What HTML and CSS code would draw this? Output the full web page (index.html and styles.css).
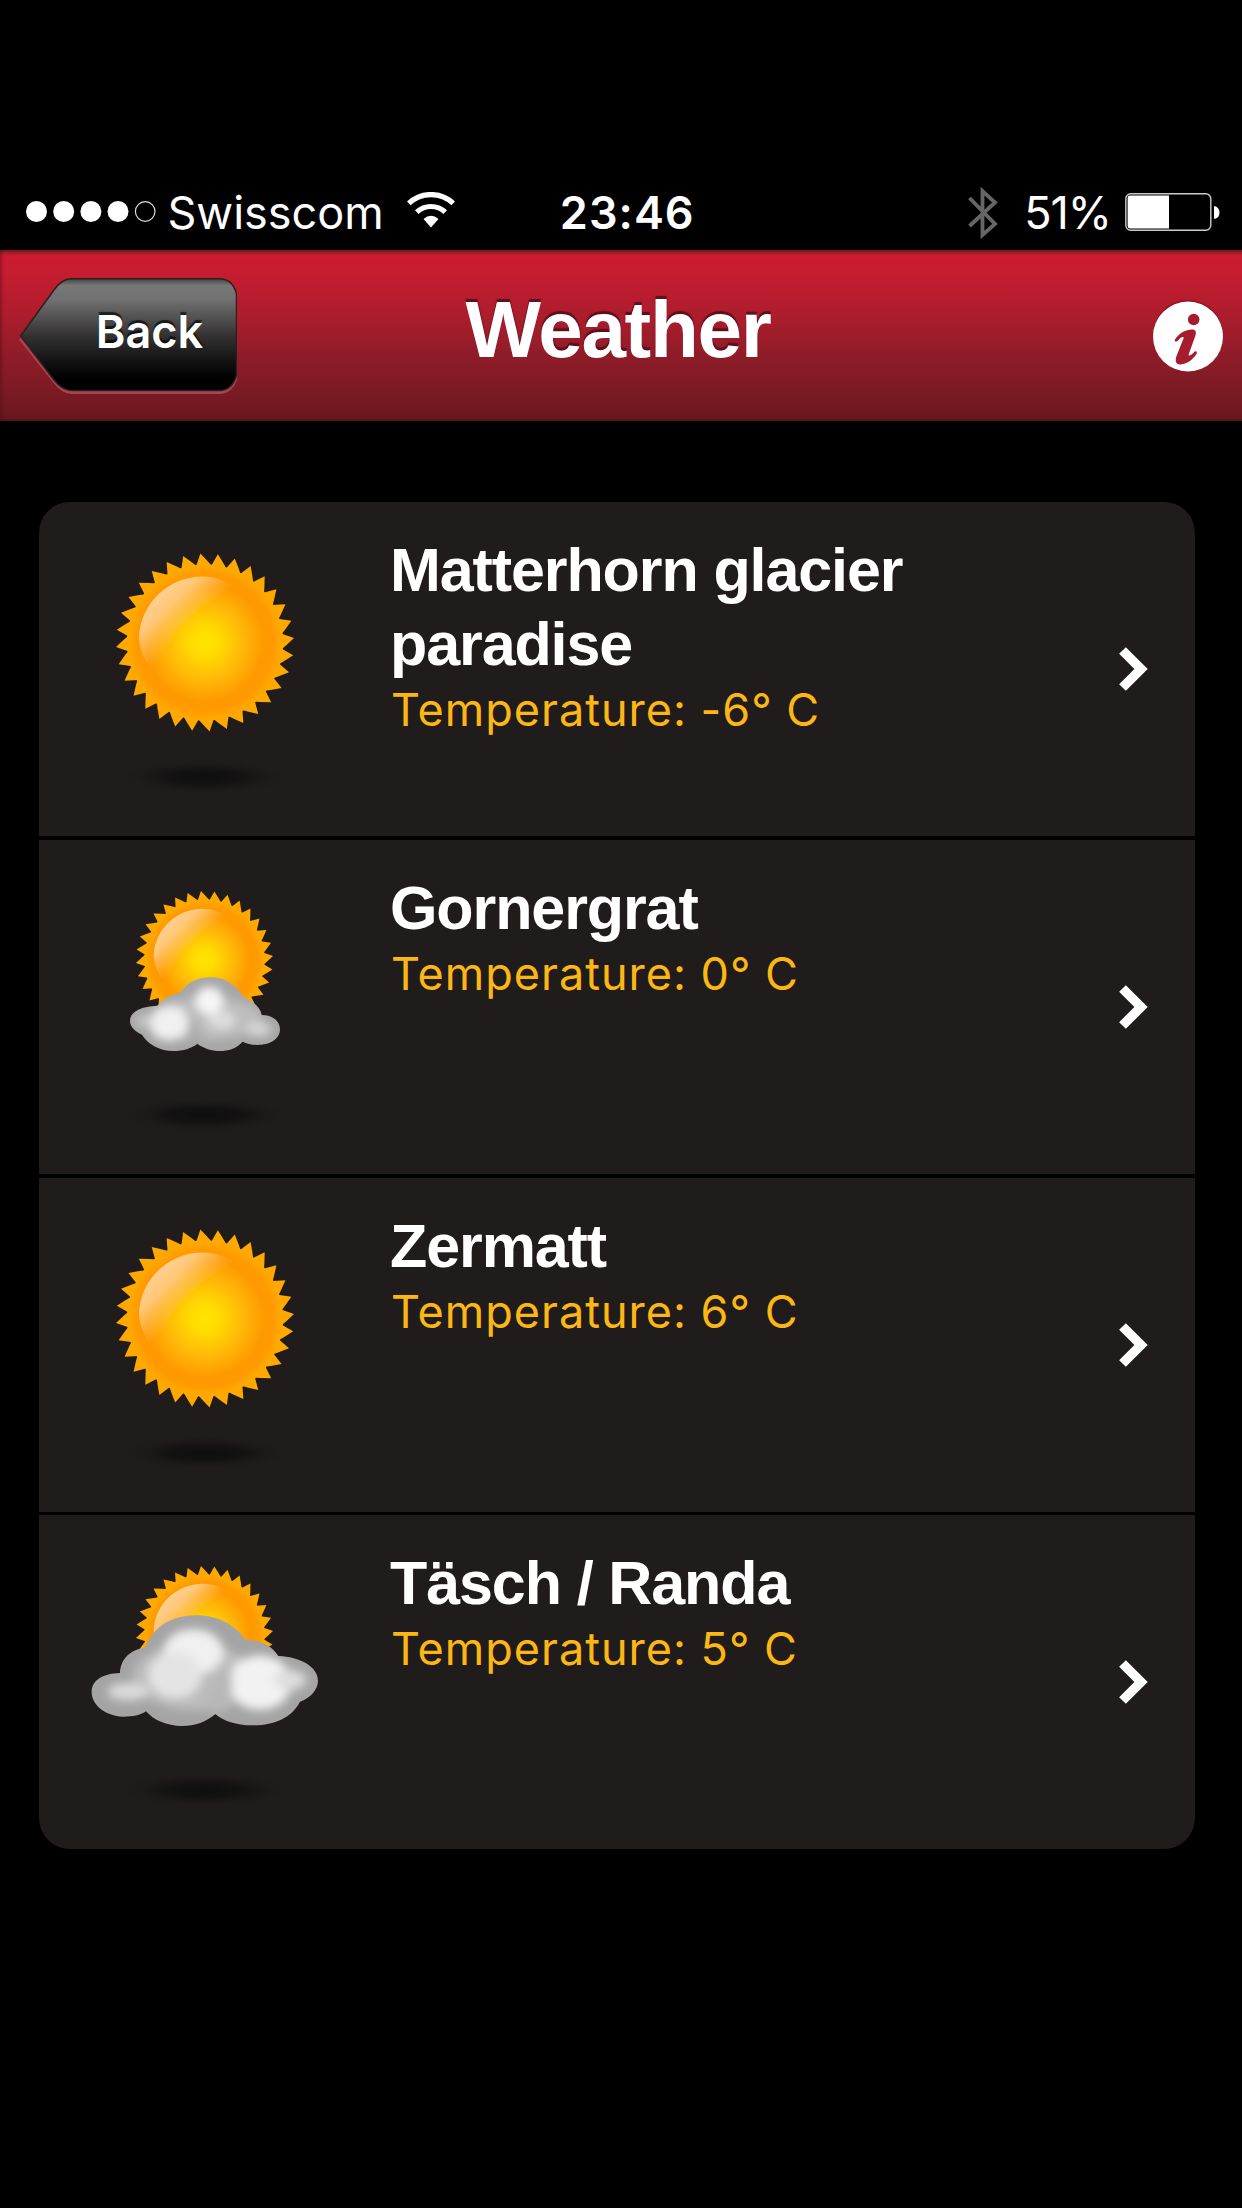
FILE: index.html
```
<!DOCTYPE html>
<html lang="en">
<head>
<meta charset="utf-8">
<title>Weather</title>
<link rel="stylesheet" href="styles.css">
</head>
<body>
<svg class="defs" aria-hidden="true">
  <defs>
    <radialGradient id="sunFill" gradientUnits="userSpaceOnUse" cx="0" cy="0" r="76">
      <stop offset="0" stop-color="#ffe400"/><stop offset=".18" stop-color="#ffdc00"/>
      <stop offset=".5" stop-color="#ffb808"/><stop offset=".78" stop-color="#ff9900"/>
      <stop offset=".9" stop-color="#ff9a00"/><stop offset="1" stop-color="#ffa800"/>
    </radialGradient>
    <linearGradient id="gloss" gradientUnits="userSpaceOnUse" x1="-48" y1="-48" x2="-14" y2="-14">
      <stop offset="0" stop-color="#ffd092"/><stop offset=".35" stop-color="#ffcf8c" stop-opacity=".85"/><stop offset="1" stop-color="#ffc060" stop-opacity="0"/>
    </linearGradient>
    <radialGradient id="shade">
      <stop offset="0" stop-color="#0e0e0e"/><stop offset=".45" stop-color="#121111" stop-opacity=".85"/><stop offset="1" stop-color="#1b1918" stop-opacity="0"/>
    </radialGradient>
    <filter id="soft" x="-30%" y="-30%" width="160%" height="160%"><feGaussianBlur stdDeviation="14"/></filter>
    <path id="t1" d="M-9 -76 L-4.6 -89 L3 -81 L9 -74Z"/>
    <g id="t2"><use href="#t1"/><use href="#t1" transform="rotate(11.25)"/></g>
    <g id="t4"><use href="#t2"/><use href="#t2" transform="rotate(22.5)"/></g>
    <g id="t8"><use href="#t4"/><use href="#t4" transform="rotate(45)"/></g>
    <g id="t16"><use href="#t8"/><use href="#t8" transform="rotate(90)"/></g>
    <g id="sun">
      <g fill="#ffa900"><use href="#t16"/><use href="#t16" transform="rotate(180)"/></g>
      <circle r="78" fill="url(#sunFill)"/>
      <path fill="url(#gloss)" d="M-50 32 C-62 18 -66 4 -66 -6 C-64 -40 -36 -66 -2 -66 C12 -66 24 -61 31 -52 C15 -48 -2 -40 -14 -26 C-32 -8 -42 6 -50 32Z"/>
    </g>
    <ellipse id="shadow" cx="120" cy="275" rx="84" ry="17" fill="url(#shade)"/>
    <path id="smallCloud" d="M150 483C150 455 180 440 232 437C250 415 275 403 300 398C325 365 355 352 392 352C435 352 465 372 490 410C520 425 540 440 545 465C580 465 600 485 600 508C600 540 565 556 530 555C515 555 500 550 488 545C470 565 445 573 420 573C395 573 370 565 352 551C335 565 310 573 280 573C235 573 200 548 186 524C165 515 150 500 150 483Z"/>
    <path id="bigCloud" d="M95 456C95 420 130 400 180 399C182 360 205 332 256 322C280 260 335 226 410 226C475 226 525 255 556 299C600 300 635 315 655 348C720 350 774 380 774 422C774 450 750 475 720 485C695 535 640 556 575 556C530 556 490 543 466 522C440 545 405 558 366 558C320 558 280 540 258 514C240 526 220 530 190 530C135 528 95 495 95 456Z"/>
    <clipPath id="smallClip"><use href="#smallCloud"/></clipPath>
    <clipPath id="bigClip"><use href="#bigCloud"/></clipPath>
  </defs>
</svg>

<div class="status">
  <div class="carrier">
    <svg class="dots" width="130" height="21" viewBox="0 0 130 21"><g fill="#fff"><circle cx="10.5" cy="10.5" r="10.5"/><circle cx="37.7" cy="10.5" r="10.5"/><circle cx="64.9" cy="10.5" r="10.5"/><circle cx="92" cy="10.5" r="10.5"/></g><circle cx="119.2" cy="10.5" r="9.8" fill="none" stroke="#ddd" stroke-width="1.2"/></svg>
    <span>Swisscom</span>
    <svg class="wifi" width="48" height="36" viewBox="0 0 48 36"><g fill="none" stroke="#fff" stroke-width="5.2"><path d="M1.8 11.3A32.5 32.5 0 0 1 46.2 11.3"/><path d="M9.8 20.2A20.5 20.5 0 0 1 38.2 20.2"/></g><path fill="#fff" d="M24 35.5L16.5 27Q24 20.5 31.5 27Z"/></svg>
  </div>
  <div class="time">23:46</div>
  <div class="power">
    <svg class="bt" width="30" height="54" viewBox="0 0 30 54"><path fill="none" stroke="#666" stroke-width="3.8" d="M1.5 12L27 38L14.5 49V5L27 16.5L1.5 40"/></svg>
    <span class="percent">51%</span>
    <svg class="battery" width="96" height="38" viewBox="0 0 96 38"><rect x=".8" y=".8" width="85" height="36.4" rx="5" fill="none" stroke="#ccc" stroke-width="1.4"/><path fill="#fff" d="M5 2.6H44V35.4H5Q2.6 35.4 2.6 33V5Q2.6 2.6 5 2.6ZM89 13Q94.5 14 94.5 19.5T89 26Z"/></svg>
  </div>
</div>

<header class="bar">
  <a class="back">
    <svg class="back-shape" width="220" height="118" viewBox="0 0 220 118">
      <defs><linearGradient id="metal" x1="0" y1="0" x2="0" y2="1"><stop offset="0" stop-color="#444"/><stop offset=".06" stop-color="#777"/><stop offset=".18" stop-color="#727272"/><stop offset=".5" stop-color="#353333"/><stop offset=".75" stop-color="#111"/><stop offset=".9" stop-color="#000"/></linearGradient>
      <clipPath id="backClip"><rect width="218" height="118"/></clipPath></defs>
      <g clip-path="url(#backClip)">
      <path fill="#a84450" transform="translate(0 3.6)" d="M0 58L35 12Q43 1 52 .5H202Q214 2 218.5 16V97Q214 111 202 112.5H52Q43 112 35 102Z"/>
      <path fill="url(#metal)" stroke="#2b2020" stroke-width="1.5" d="M1.5 58L35 12Q43 1 52 .8H202Q214 2 217.5 16V97Q214 111 202 112.5H52Q43 112 35 102Z"/></g>
    </svg>
    <span class="back-label">Back</span>
  </a>
  <h1 class="title">Weather</h1>
  <svg class="info" width="70" height="72" viewBox="0 0 70 72"><circle cx="35" cy="35" r="35.4" fill="#7d1622" opacity=".6"/><circle cx="35" cy="36.5" r="35" fill="#fff"/><circle cx="40.7" cy="19.5" r="5.8" fill="#a51c2c"/><path fill="#a51c2c" d="M22 39.5C26 33 33 29.5 39 29.5C43 29.5 43.5 32 42.3 36L35.8 54C35 57 38 55.5 41.7 51.5C43.5 50.5 44.5 52 43.5 54C39 61 32 64.5 27 64.5C22.5 64.5 22 60 23.5 56L30.5 38.5C31.5 36 28 36.5 25 40.5C23.5 42.5 20.8 41.5 22 39.5Z"/></svg>
</header>

<main class="list">
  <section class="row">
    <svg class="icon" width="240" height="334" viewBox="0 0 240 334"><use href="#shadow"/><use href="#sun" transform="translate(120 140.5)"/></svg>
    <div class="text"><h2>Matterhorn glacier paradise</h2><p>Temperature: -6° C</p></div>
    <svg class="chevron" width="30" height="44" viewBox="0 0 30 44"><path d="M3.5 3.5L22 22L3.5 40.5" fill="none" stroke="#fff" stroke-width="9.5"/></svg>
  </section>
  <section class="row">
    <svg class="icon" width="240" height="334" viewBox="0 0 240 334"><use href="#shadow"/><use href="#sun" transform="translate(119.5 119.5) scale(.77)"/>
      <g transform="translate(-5 20) scale(.3333)"><use href="#smallCloud" fill="#a6a6a6"/><g clip-path="url(#smallClip)"><g filter="url(#soft)"><ellipse cx="380" cy="475" rx="165" ry="65" fill="#bdbdbd"/><ellipse cx="268" cy="490" rx="60" ry="52" fill="#f0f0f0"/><ellipse cx="190" cy="483" rx="24" ry="18" fill="#c8c8c8"/><ellipse cx="388" cy="422" rx="42" ry="42" fill="#f6f6f6"/><ellipse cx="425" cy="480" rx="42" ry="28" fill="#ddd"/><ellipse cx="535" cy="508" rx="38" ry="20" fill="#d8d8d8"/><path d="M325 455L370 530L350 550L322 545Z" fill="#aaa"/></g></g></g>
    </svg>
    <div class="text"><h2>Gornergrat</h2><p>Temperature: 0° C</p></div>
    <svg class="chevron" width="30" height="44" viewBox="0 0 30 44"><path d="M3.5 3.5L22 22L3.5 40.5" fill="none" stroke="#fff" stroke-width="9.5"/></svg>
  </section>
  <section class="row">
    <svg class="icon" width="240" height="334" viewBox="0 0 240 334"><use href="#shadow"/><use href="#sun" transform="translate(120 140.5)"/></svg>
    <div class="text"><h2>Zermatt</h2><p>Temperature: 6° C</p></div>
    <svg class="chevron" width="30" height="44" viewBox="0 0 30 44"><path d="M3.5 3.5L22 22L3.5 40.5" fill="none" stroke="#fff" stroke-width="9.5"/></svg>
  </section>
  <section class="row">
    <svg class="icon" width="240" height="334" viewBox="0 0 240 334"><use href="#shadow"/><use href="#sun" transform="translate(119.5 119.5) scale(.77)"/>
      <g transform="translate(-25 25) scale(.3333)"><use href="#bigCloud" fill="#a4a4a4"/><g clip-path="url(#bigClip)"><g filter="url(#soft)"><ellipse cx="400" cy="410" rx="180" ry="100" fill="#bdbdbd"/><ellipse cx="400" cy="335" rx="90" ry="68" fill="#f0f0f0"/><ellipse cx="345" cy="405" rx="80" ry="70" fill="#e4e4e4"/><ellipse cx="205" cy="455" rx="62" ry="26" fill="#dcdcdc"/><ellipse cx="600" cy="428" rx="95" ry="82" fill="#f2f2f2"/><ellipse cx="690" cy="420" rx="48" ry="30" fill="#ddd"/><path d="M470 400L515 390L518 500L460 525L425 480Z" fill="#b8b8b8"/></g></g></g>
    </svg>
    <div class="text"><h2>Täsch / Randa</h2><p>Temperature: 5° C</p></div>
    <svg class="chevron" width="30" height="44" viewBox="0 0 30 44"><path d="M3.5 3.5L22 22L3.5 40.5" fill="none" stroke="#fff" stroke-width="9.5"/></svg>
  </section>
</main>
</body>
</html>
```
FILE: styles.css
```
* { box-sizing: border-box; margin: 0; padding: 0; }
body { background: #000; color: #fff; min-height: 2208px; font-family: Inter, "Liberation Sans", sans-serif; }
svg { display: block; flex: none; }
.defs { width: 0; height: 0; position: absolute; }

.status { height: 250px; padding: 176px 21px 0 25.5px; display: grid; grid-template-columns: 1fr auto 1fr; align-items: center; font-size: 45px; line-height: 74px; }
.carrier, .power { display: flex; align-items: center; }
.carrier .dots { margin: 0 12px 4px 0; }
.carrier .wifi { margin: 0 0 6px 23px; }
.time { font-weight: 600; letter-spacing: 1px; padding-left: 8px; }
.power { justify-content: flex-end; }
.bt { margin-right: 26px; }
.percent { letter-spacing: -1px; }
.battery { margin: 0 0 2px 14px; }

.bar { height: 171px; padding: 0 19px; display: grid; grid-template-columns: 1fr auto 1fr; align-items: center;
  background: linear-gradient(#701520 0, #a81c2b 3px, #cb1c31 6px, #c91c30 18px, #ad1d2d 65px, #8c1c28 110px, #711920 160px, #68171e 168px, #581117 171px);
  box-shadow: inset 4px 0 3px -2px rgba(80, 10, 20, .4); }
.back { position: relative; width: 220px; height: 118px; display: flex; align-items: center; justify-content: center; padding: 0 0 8px 41px; }
.back-shape { position: absolute; left: 0; top: 1px; }
.back-label { position: relative; font-size: 45px; line-height: 54px; font-weight: 600; text-shadow: 0 -3px 1px rgba(0, 0, 0, .65); }
.title { font: 700 80px/100px "Liberation Sans", sans-serif; letter-spacing: -1.3px; padding: 0 6px 12px 0; text-shadow: 0 -3px 1px #5c101b; }
.info { justify-self: end; }

.list { width: 1156px; margin: 81px 0 0 39px; border-radius: 31px; overflow: hidden; }
.row { height: 334px; margin-bottom: 4px; background: #201c1b; display: flex; padding: 0 46px; }
.row:nth-child(3) { margin-bottom: 3px; }
.row:last-child { margin-bottom: 0; }
.text { flex: 1; padding: 30.5px 100px 0 65px; }
.text h2 { font: 700 61px/74px "Liberation Sans", sans-serif; letter-spacing: -1.1px; }
.text p { font-size: 45px; line-height: 57px; letter-spacing: 1px; color: #fdb714; padding-left: 1px; }
.chevron { align-self: center; }
```
